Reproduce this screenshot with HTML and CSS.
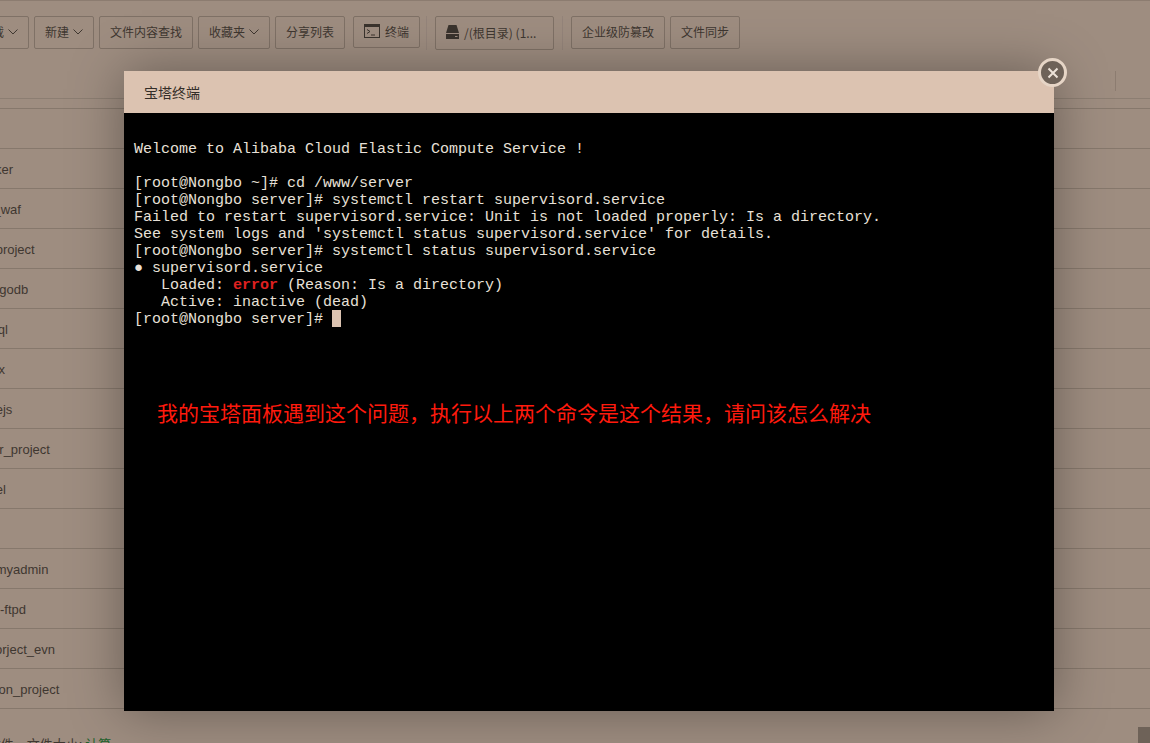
FILE: index.html
```html
<!DOCTYPE html>
<html lang="zh-CN">
<head>
<meta charset="utf-8">
<title>宝塔终端</title>
<link rel="stylesheet" href="styles.css">
</head>
<body>
<div class="page">
  <div class="toolbar">
    <button class="btn btn-first">下载<svg class="chev" viewBox="0 0 10 6"><path d="M.5.5 5 5 9.500.5"/></svg></button>
    <button class="btn">新建<svg class="chev" viewBox="0 0 10 6"><path d="M.5.5 5 5 9.500.5"/></svg></button>
    <button class="btn">文件内容查找</button>
    <button class="btn">收藏夹<svg class="chev" viewBox="0 0 10 6"><path d="M.5.5 5 5 9.500.5"/></svg></button>
    <button class="btn">分享列表</button>
    <button class="btn btn-term"><svg class="ico-term" viewBox="0 0 16 14"><rect x=".5" y=".5" width="15" height="13" fill="none" stroke="#3a332d"/><rect x="0" y="0" width="16" height="3" fill="#3a332d"/><path d="M3 5.500 6 7.500 3 9.500M7 11h4" fill="none" stroke="#3a332d"/></svg>终端</button>
    <span class="sep sep-a"></span>
    <button class="btn btn-disk"><svg class="ico-disk" viewBox="0 0 13 14"><path d="M2.500 0h8L13 8H0z" fill="#3a332d"/><rect y="9" width="13" height="5" fill="#3a332d"/><rect x="9" y="11" width="2.500" height="1" fill="#9d8c7f"/></svg>/(根目录) (1...</button>
    <span class="sep"></span>
    <button class="btn">企业级防篡改</button>
    <button class="btn">文件同步</button>
  </div>
  <div class="thead"><div class="th-row"><span class="th-line"></span></div></div>
  <div class="rows">
    <div class="row"></div>
    <div class="row"><span class="name">docker</span></div>
    <div class="row"><span class="name">xss_waf</span></div>
    <div class="row"><span class="name">go_project</span></div>
    <div class="row"><span class="name">mongodb</span></div>
    <div class="row"><span class="name">mysql</span></div>
    <div class="row"><span class="name">nginx</span></div>
    <div class="row"><span class="name">nodejs</span></div>
    <div class="row"><span class="name">other_project</span></div>
    <div class="row"><span class="name">panel</span></div>
    <div class="row"><span class="name">php</span></div>
    <div class="row"><span class="name">phpmyadmin</span></div>
    <div class="row"><span class="name">pure-ftpd</span></div>
    <div class="row"><span class="name">pyporject_evn</span></div>
    <div class="row"><span class="name">python_project</span></div>
  </div>
  <div class="summary">共14个目录，0个文件，文件大小: <span class="calc">计算</span></div>
</div>
<div class="thumb"></div>
<div class="modal">
  <div class="modal-title">宝塔终端</div>
  <pre class="terminal">Welcome to Alibaba Cloud Elastic Compute Service !

[root@Nongbo ~]# cd /www/server
[root@Nongbo server]# systemctl restart supervisord.service
Failed to restart supervisord.service: Unit is not loaded properly: Is a directory.
See system logs and 'systemctl status supervisord.service' for details.
[root@Nongbo server]# systemctl status supervisord.service
● supervisord.service
   Loaded: <b class="err">error</b> (Reason: Is a directory)
   Active: inactive (dead)
[root@Nongbo server]# <span class="cursor"></span></pre>
  <div class="note">我的宝塔面板遇到这个问题，执行以上两个命令是这个结果，请问该怎么解决</div>
  <div class="close"><svg viewBox="0 0 12 12"><path d="M1.500 1.500l9 9M10.500 1.500l-9 9"/></svg></div>
</div>
</body>
</html>
```
FILE: styles.css
```css
html, body {
  margin: 0;
  height: 743px;
  overflow: hidden;
  background: #9e8d80;
  color: #3f3730;
  font-family: "Liberation Sans", "Noto Sans CJK SC", sans-serif;
}
.page {
  width: 1150px;
  height: 743px;
  overflow: hidden;
  display: flex;
  flex-direction: column;
  border-top: 1px solid #8c7c70;
  box-sizing: border-box;
}
.toolbar {
  display: flex;
  align-items: flex-start;
  gap: 5px;
  height: 63px;
  box-sizing: border-box;
  padding-top: 15px;
  margin-left: -31px;
  flex: none;
}
.btn {
  height: 33px;
  padding: 0 10px 2px;
  border: 1px solid #7f7166;
  border-radius: 2px;
  background: transparent;
  color: #3f3730;
  font: 12px "Noto Sans CJK SC", sans-serif;
  display: flex;
  align-items: center;
  flex: none;
  white-space: nowrap;
}
.btn-first { width: 60px; justify-content: flex-end; }
.chev {
  width: 10px;
  height: 6px;
  margin-left: 4px;
  fill: none;
  stroke: #3f3730;
  stroke-width: 1;
}
.btn-term {
  height: 32px;
  margin-left: 3px;
}
.ico-term { width: 16px; height: 14px; margin-right: 5px; }
.btn-disk {
  height: 34px;
  width: 119px;
  box-sizing: border-box;
}
.ico-disk { width: 13px; height: 14px; margin-right: 5px; }
.sep {
  width: 1px;
  height: 34px;
  background: #94847a;
  margin: 0 3px;
}
.sep-a { margin-left: 1px; }
.thead {
  flex: none;
  height: 45px;
  box-sizing: border-box;
  border-bottom: 1px solid #86786c;
}
.th-row {
  height: 35px;
  box-sizing: border-box;
  border-bottom: 1px solid #8c7e72;
  display: flex;
  justify-content: flex-end;
  padding: 7px 34px 0 0;
}
.th-line {
  width: 1px;
  height: 20px;
  background: #8c7c70;
}
.rows {
  flex: none;
  display: flex;
  flex-direction: column;
  margin-left: -26px;
}
.row {
  height: 40px;
  box-sizing: border-box;
  border-bottom: 1px solid #86786c;
  display: flex;
  align-items: center;
  padding-top: 1px;
  font-size: 13px;
}
.name { color: #3f3730; }
.summary {
  margin-top: 25px;
  margin-left: -112px;
  font: 13px "Noto Sans CJK SC", sans-serif;
  white-space: nowrap;
}
.calc { color: #20602a; }
.thumb {
  position: absolute;
  right: 0;
  bottom: 0;
  width: 12px;
  height: 16px;
  background: #6e6258;
}
.modal {
  position: absolute;
  left: 124px;
  top: 71px;
  width: 930px;
  height: 640px;
  display: flex;
  flex-direction: column;
  background: #000;
  box-shadow: 0 0 50px rgba(0, 0, 0, .35);
}
.modal-title {
  flex: none;
  height: 42px;
  padding-left: 20px;
  background: #dcc3b1;
  color: #332d28;
  font: 14px/42px "Noto Sans CJK SC", sans-serif;
}
.terminal {
  flex: 1;
  margin: 0;
  padding: 28px 10px 0;
  font: 15px/17px "Liberation Mono", monospace;
  color: #e8e0d8;
  white-space: pre;
}
.err { color: #e02020; }
.cursor {
  display: inline-block;
  width: 9px;
  height: 17px;
  margin-top: -1px;
  background: #dcc3b1;
  vertical-align: top;
}
.note {
  position: absolute;
  left: 33px;
  top: 327px;
  color: #ff1a0d;
  font: 21px/28px "Noto Sans CJK SC", sans-serif;
  white-space: nowrap;
}
.close {
  position: absolute;
  right: -13px;
  top: -13px;
  width: 23px;
  height: 23px;
  border: 3px solid #e6d5c6;
  border-radius: 50%;
  background: #6e6258;
  display: flex;
  align-items: center;
  justify-content: center;
}
.close svg {
  width: 12px;
  height: 12px;
  fill: none;
  stroke: #ece2d8;
  stroke-width: 2;
}
```
